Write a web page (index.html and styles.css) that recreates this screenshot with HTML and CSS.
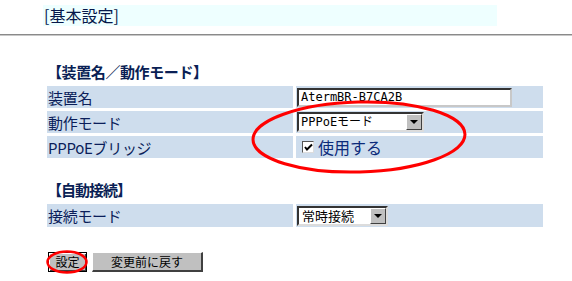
FILE: index.html
```
<!DOCTYPE html>
<html lang="ja">
<head>
  <meta charset="UTF-8" />
  <title>基本設定</title>
  <link rel="stylesheet" href="styles.css">
</head>
<body>
  <div class="page">
    <div class="title-bar">[基本設定]</div>
    <hr class="rule" />

    <div class="content">
      <h3 class="section-title first">【装置名／動作モード】</h3>
      <div class="form-grid">
        <div class="label">装置名</div>
        <div class="value"><span class="text-box">AtermBR-B7CA2B</span></div>
        <div class="label">動作モード</div>
        <div class="value">
          <span class="select wide"><span class="select-text">PPPoEモード</span><span class="select-arrow"></span></span>
        </div>
        <div class="label">PPPoEブリッジ</div>
        <div class="value">
          <span class="check"><svg width="9" height="9" viewBox="0 0 9 9"><path d="M1 4 L3 6.5 L8 1.5" fill="none" stroke="#000" stroke-width="2"/></svg></span>
          <span class="check-label">使用する</span>
        </div>
      </div>

      <h3 class="section-title short">【自動接続】</h3>
      <div class="form-grid">
        <div class="label tall">接続モード</div>
        <div class="value tall">
          <span class="select narrow"><span class="select-text">常時接続</span><span class="select-arrow"></span></span>
        </div>
      </div>

      <div class="buttons">
        <button class="btn default">設定</button>
        <button class="btn reset">変更前に戻す</button>
      </div>
    </div>

    <svg class="mark mark-mode" width="230" height="84" viewBox="0 0 230 84">
      <ellipse cx="112" cy="40" rx="106" ry="35" fill="none" stroke="#ff0000" stroke-width="3" transform="rotate(-1.5 112 40)"/>
    </svg>
    <svg class="mark mark-set" width="48" height="28" viewBox="0 0 48 28">
      <ellipse cx="23" cy="14" rx="19.5" ry="10.5" fill="none" stroke="#ff0000" stroke-width="2.5"/>
    </svg>
  </div>
</body>
</html>
```

FILE: styles.css
```
* {
  box-sizing: border-box;
}
body {
  margin: 0;
  background: #ffffff;
  color: #0b1e5a;
  font-family: "Noto Sans CJK JP", "Noto Sans", sans-serif;
}
.page {
  position: relative;
  width: 572px;
  height: 281px;
  overflow: hidden;
}
.title-bar {
  margin: 5px 0 0 43px;
  width: 454px;
  height: 21px;
  padding-left: 1px;
  background: #eeffff;
  font-size: 16px;
  line-height: 20px;
  color: #06184a;
}
.rule {
  margin: 8px 0 0;
  height: 2px;
  border: none;
  border-top: 1px solid #8a8a8a;
  border-bottom: 1px solid #c8c8c8;
}
.content {
  padding-left: 47px;
}
.section-title {
  margin: 23px 0 0;
  height: 18px;
  font-size: 15px;
  line-height: 18px;
  font-weight: bold;
  letter-spacing: -0.4px;
  color: #0a1f55;
}
.section-title.first {
  margin-top: 27px;
}
.section-title.short {
  letter-spacing: -1px;
}
.form-grid {
  display: grid;
  grid-template-columns: 246px 247px;
  grid-auto-rows: 22px;
  gap: 3px;
  margin-top: 5px;
}
.label,
.value {
  background: #cedded;
  display: flex;
  align-items: center;
}
.label {
  padding-left: 1px;
  font-size: 15px;
  letter-spacing: -0.3px;
}
.value {
  padding-left: 1px;
}
.tall {
  height: 23px;
}
.text-box {
  display: flex;
  align-items: center;
  width: 215px;
  height: 19px;
  background: #fff;
  border-top: 2px solid #333;
  border-left: 2px solid #333;
  border-right: 2px solid #c8c8c8;
  border-bottom: 2px solid #c8c8c8;
  padding-left: 2px;
  font-family: "DejaVu Sans Mono", "Noto Sans CJK JP", monospace;
  font-size: 12px;
  line-height: 14px;
  color: #000;
}
.select {
  display: flex;
  height: 20px;
  background: #fff;
  border-top: 2px solid #333;
  border-left: 2px solid #333;
  border-right: 2px solid #dcdcdc;
  border-bottom: 2px solid #dcdcdc;
  color: #000;
}
.select.wide {
  width: 127px;
}
.select.narrow {
  width: 91px;
  margin-top: 1px;
}
.select-text {
  flex: 1;
  padding-left: 2px;
  font-family: "DejaVu Sans Mono", "Noto Sans CJK JP", monospace;
  font-size: 12px;
  line-height: 16px;
  white-space: nowrap;
}
.narrow .select-text {
  font-family: "Noto Sans CJK JP", sans-serif;
  font-size: 13px;
  padding-left: 3px;
}
.select-arrow {
  position: relative;
  width: 16px;
  height: 16px;
  background: #c0c0c0;
  border-top: 1px solid #ffffff;
  border-left: 1px solid #ffffff;
  border-right: 1px solid #404040;
  border-bottom: 1px solid #404040;
}
.select-arrow::after {
  content: "";
  position: absolute;
  left: 3px;
  top: 5px;
  border-left: 4px solid transparent;
  border-right: 4px solid transparent;
  border-top: 4px solid #000;
}
.check {
  display: flex;
  align-items: center;
  justify-content: center;
  width: 12px;
  height: 12px;
  margin-left: 5px;
  background: #fff;
  border-top: 1px solid #555;
  border-left: 1px solid #555;
  border-right: 1px solid #ddd;
  border-bottom: 1px solid #ddd;
}
.check-label {
  margin-left: 4px;
  font-size: 16px;
  line-height: 20px;
  color: #0b2a7a;
}
.buttons {
  display: flex;
  gap: 5px;
  margin-top: 26px;
  margin-left: 1px;
}
.btn {
  height: 20px;
  padding: 0;
  background: #c0c0c0;
  font-family: "Noto Sans CJK JP", sans-serif;
  font-size: 12px;
  line-height: 16px;
  color: #000;
  border-top: 1px solid #ffffff;
  border-left: 1px solid #ffffff;
  border-right: 2px solid #404040;
  border-bottom: 2px solid #404040;
}
.btn.default {
  width: 39px;
  border: 1px solid #000;
  box-shadow: inset 1px 1px #fff, inset -1px -1px #404040;
}
.btn.reset {
  width: 111px;
}
.mark {
  position: absolute;
  pointer-events: none;
}
.mark-mode {
  left: 247px;
  top: 97px;
}
.mark-set {
  left: 44px;
  top: 248px;
}
```
